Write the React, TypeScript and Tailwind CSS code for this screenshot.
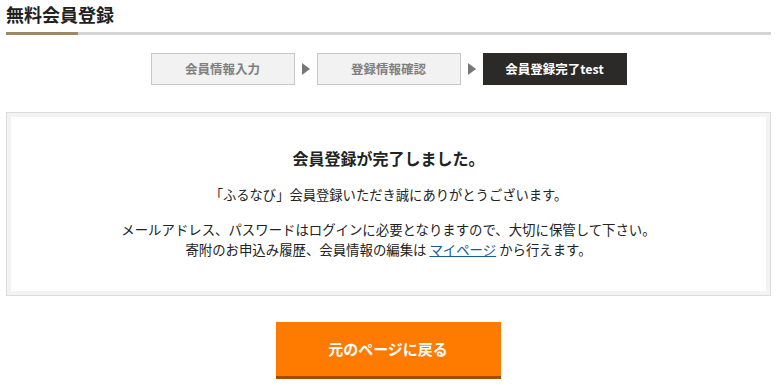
import React from 'react'

const font = { fontFamily: '"Noto Sans CJK JP", "Noto Sans", sans-serif' }

const Arrow = () => (
    <svg width="8" height="12" viewBox="0 0 8 12" className="mx-[7px]">
        <path d="M0 0 L8 6 L0 12 Z" fill="#777" />
    </svg>
)

const Step = ({ label, active }: { label: string; active?: boolean }) => (
    <div
        className={
            active
                ? 'w-[144px] h-[32px] flex items-center justify-center bg-[#2b2a28] text-white text-[12.5px] font-bold'
                : 'w-[144px] h-[32px] flex items-center justify-center bg-[#f2f2f2] border border-[#c8c8c8] text-[#808080] text-[12.5px] font-bold'
        }
    >
        {label}
    </div>
)

const App = () => {
    return (
        <div className="w-[778px] h-[387px] bg-white text-[#222] overflow-hidden" style={font}>
            <div className="pl-[6px] pr-[7px]">
                <h1 className="pt-[1px] h-[32px] text-[18px] font-bold leading-[26px] text-[#222]">無料会員登録</h1>
                <div className="flex h-[3px]">
                    <div className="w-[72px] bg-[#9c8a64]" />
                    <div className="flex-1 bg-[#d4d4d4]" />
                </div>

                <div className="flex items-center justify-center mt-[18px]">
                    <Step label="会員情報入力" />
                    <Arrow />
                    <Step label="登録情報確認" />
                    <Arrow />
                    <Step label="会員登録完了test" active />
                </div>

                <div className="mt-[27px] border border-[#dcdcdc] bg-[#f3f3f3] p-[4px]">
                    <div className="bg-white h-[174px] flex flex-col items-center pt-[29px] text-center">
                        <p className="text-[16px] font-bold leading-[24px]">会員登録が完了しました。</p>
                        <p className="mt-[15px] text-[13.3px] leading-[20px]">「ふるなび」会員登録いただき誠にありがとうございます。</p>
                        <p className="mt-[14px] text-[13.4px] leading-[20px]">
                            メールアドレス、パスワードはログインに必要となりますので、大切に保管して下さい。
                            <br />
                            寄附のお申込み履歴、会員情報の編集は
                            <a className="text-[#1a5a96] underline mx-[3px]">マイページ</a>
                            から行えます。
                        </p>
                    </div>
                </div>

                <div className="flex justify-center mt-[26px] mr-[1px]">
                    <button className="w-[225px] h-[57px] bg-[#ff7b00] border-b-[3px] border-[#a24d00] text-white text-[15px] font-bold">
                        元のページに戻る
                    </button>
                </div>
            </div>
        </div>
    )
}

export default App
